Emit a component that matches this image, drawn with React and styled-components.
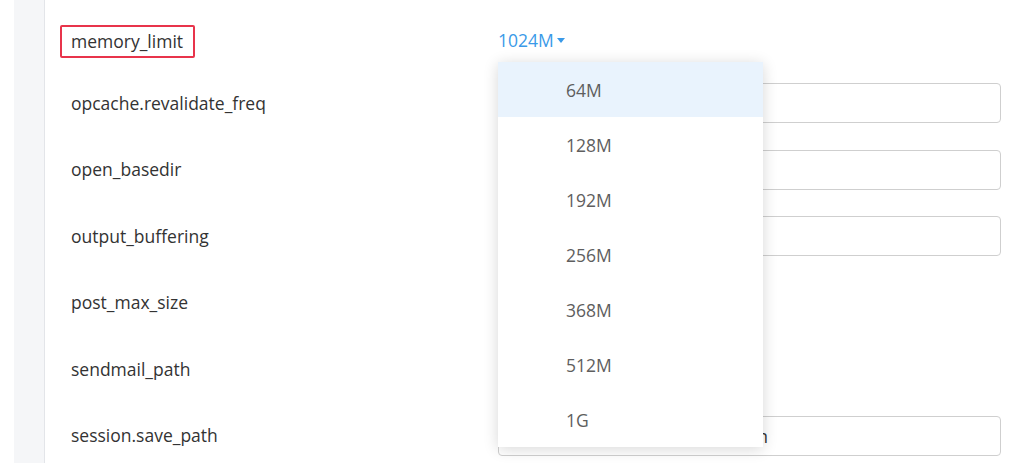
import React from "react";
import styled, { createGlobalStyle } from "styled-components";

const GlobalStyle = createGlobalStyle`
  * {
    margin: 0;
    padding: 0;
    box-sizing: border-box;
  }
  body {
    background: #ffffff;
    font-family: "Open Sans", "Liberation Sans", sans-serif;
    color: #333333;
    overflow: hidden;
  }
`;

const Page = styled.div`
  display: flex;
  height: 463px;
  padding-left: 14px;
`;

const Rail = styled.aside`
  width: 31px;
  background: #f5f6f8;
  border-right: 1px solid #e3e5e9;
  flex-shrink: 0;
`;

const Content = styled.main`
  flex: 1;
  display: flex;
  flex-direction: column;
  gap: 26.5px;
  padding: 25px 24px 0 15px;
`;

const Row = styled.div`
  display: grid;
  grid-template-columns: 438px 503px;
  align-items: center;
  height: ${(p) => (p.$first ? "33px" : "40px")};
  margin-bottom: ${(p) => (p.$first ? "-1.5px" : "0")};
`;

const Label = styled.div`
  justify-self: start;
  font-size: 17.5px;
  line-height: 23px;
  padding: 3px 10px 3px 9px;
  border: 2px solid ${(p) => (p.$marked ? "#e8344b" : "transparent")};
  border-radius: 2px;
  color: #333333;
`;

const Cell = styled.div`
  position: relative;
  height: 100%;
  display: flex;
  align-items: center;
`;

const Trigger = styled.button`
  display: inline-flex;
  align-items: center;
  gap: 3px;
  background: none;
  border: none;
  font: inherit;
  font-size: 17.5px;
  line-height: 23px;
  color: #3a9ae8;
  cursor: pointer;
  padding: 0 0 3px 0;
`;

const Caret = styled.span`
  width: 0;
  height: 0;
  border-left: 4.5px solid transparent;
  border-right: 4.5px solid transparent;
  border-top: 5px solid #3a9ae8;
  margin-top: 1px;
`;

const Field = styled.input`
  width: 100%;
  height: 40px;
  border: 1px solid #cfcfcf;
  border-radius: 4px;
  padding: 0 12px;
  font: inherit;
  font-size: 17.5px;
  color: #333333;
  background: #fff;
  outline: none;
`;

const Menu = styled.ul`
  position: absolute;
  top: calc(100% + 4px);
  left: 0;
  width: 265px;
  list-style: none;
  background: #ffffff;
  box-shadow: 0 2px 14px rgba(0, 0, 0, 0.16);
  z-index: 10;
`;

const Option = styled.li`
  height: 55px;
  display: flex;
  align-items: center;
  padding-left: 68px;
  font-size: 17.5px;
  color: #5e5e5e;
  background: ${(p) => (p.$active ? "#e9f3fd" : "#ffffff")};
`;

const sizes = ["64M", "128M", "192M", "256M", "368M", "512M", "1G"];

const settings = [
  { name: "opcache.revalidate_freq", kind: "input", value: "2" },
  { name: "open_basedir", kind: "input", value: "" },
  { name: "output_buffering", kind: "input", value: "4096" },
  { name: "post_max_size", kind: "select", value: "128M" },
  { name: "sendmail_path", kind: "none" },
  { name: "session.save_path", kind: "input", value: "/home/admin/tmp/php/session" },
];

function SizeSelect({ value, open }) {
  return (
    <Cell>
      <Trigger type="button">
        {value}
        <Caret />
      </Trigger>
      {open && (
        <Menu>
          {sizes.map((s, i) => (
            <Option key={s} $active={i === 0}>
              {s}
            </Option>
          ))}
        </Menu>
      )}
    </Cell>
  );
}

export default function App() {
  return (
    <>
      <GlobalStyle />
      <Page>
        <Rail />
        <Content>
          <Row $first>
            <Label $marked>memory_limit</Label>
            <SizeSelect value="1024M" open />
          </Row>
          {settings.map((s) => (
            <Row key={s.name}>
              <Label>{s.name}</Label>
              {s.kind === "input" && (
                <Cell>
                  <Field defaultValue={s.value} />
                </Cell>
              )}
              {s.kind === "select" && <SizeSelect value={s.value} />}
              {s.kind === "none" && <Cell />}
            </Row>
          ))}
        </Content>
      </Page>
    </>
  );
}
